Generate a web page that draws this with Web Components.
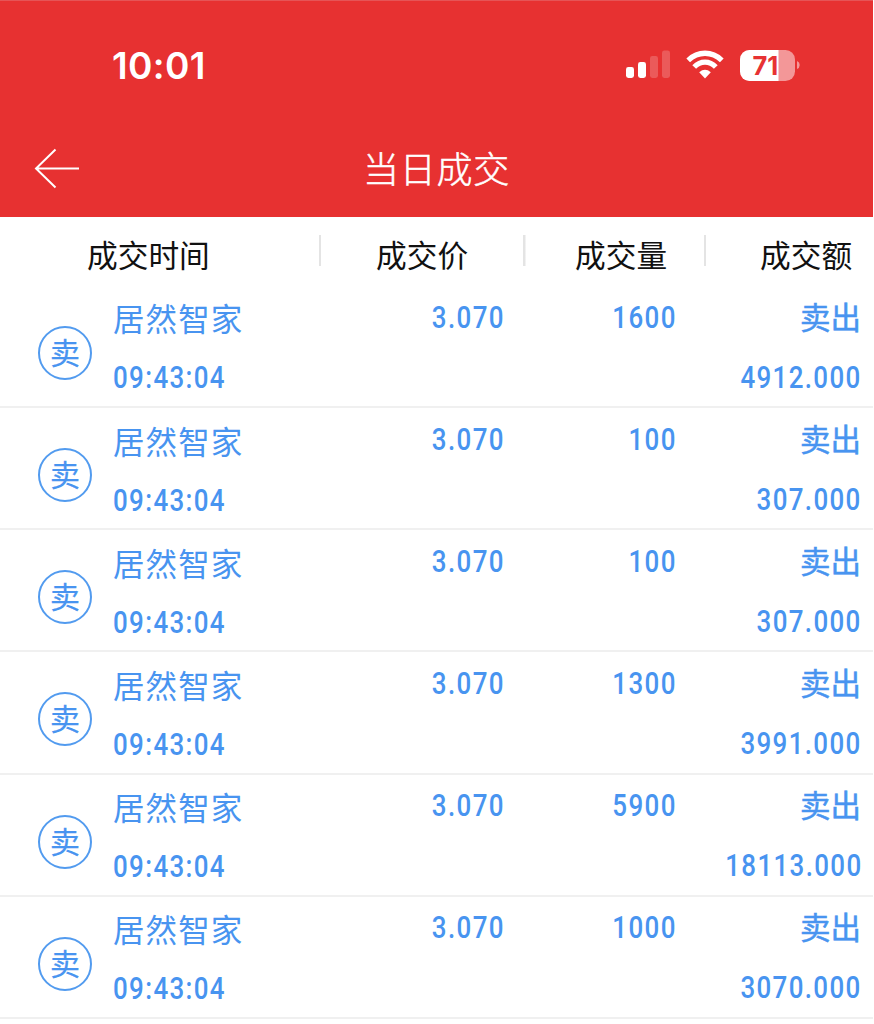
<!DOCTYPE html>
<html lang="zh-CN">
<head>
<meta charset="utf-8">
<title>当日成交</title>
<style>
html,body{margin:0;padding:0;background:#fff;overflow:hidden}
body{width:874px;height:1024px;font-family:"Noto Sans CJK SC",sans-serif}
</style>
</head>
<body>
<trade-app></trade-app>
<script>
const define = (name, html, setup) => customElements.define(name, class extends HTMLElement {
  connectedCallback() {
    if (this.shadowRoot) return;
    const t = document.createElement('template');
    t.innerHTML = html;
    this.attachShadow({mode: 'open'}).append(t.content.cloneNode(true));
    if (setup) setup(this, this.shadowRoot);
  }
});

define('status-bar', `
<style>
:host{display:flex;height:130px;box-sizing:border-box;padding:2px 72px 0 112px;justify-content:space-between;align-items:center;color:#fff}
time{font:600 37px/44px Inter,sans-serif;letter-spacing:.35px;white-space:nowrap}
.icons{display:flex;align-items:center;height:36px}
svg{display:block}
.signal{margin-right:15px}
.wifi{margin-right:15px}
</style>
<time>10:01</time>
<div class="icons">
<svg class="signal" width="46" height="36" viewBox="0 0 46 36" fill="#fff"><rect x="1" y="19" width="8" height="11" rx="2.4"/><rect x="13" y="14" width="8" height="16" rx="2.4"/><g opacity=".2"><rect x="25" y="8" width="8" height="22" rx="2.4"/><rect x="37" y="2.5" width="8" height="27.5" rx="2.4"/></g></svg>
<svg class="wifi" width="38" height="36" viewBox="0 0 38 36"><g fill="none" stroke="#fff" stroke-width="5.3"><path d="M2.2 12.3C12 2.9 26 2.9 35.8 12.3"/><path d="M8.2 19C14.5 12.6 23.5 12.6 29.8 19"/></g><path d="M13.2 24.2Q19 19.5 24.8 24.2L19 30.5Z" fill="#fff"/></svg>
<svg width="62" height="36" viewBox="0 0 62 36"><defs><clipPath id="c"><rect x="1" y="2" width="55" height="31" rx="9.5"/></clipPath></defs><g clip-path="url(#c)"><rect width="60" height="36" fill="#f39798"/><rect width="39.5" height="36" fill="#fff"/></g><path d="M58 13Q60.7 14 60.7 17Q60.7 20 58 21Z" fill="#f39798"/><text x="13.5" y="26.8" font-family="Inter,sans-serif" font-weight="700" font-size="25.5" letter-spacing="0" fill="#e73233">71</text></svg>
</div>`);

define('nav-bar', `
<style>
:host{display:grid;grid-template-columns:100px 1fr 100px;height:87px;color:#fff}
svg{display:block;margin:17px 0 0 33px}
h1{margin:11px 0 0;text-align:center;font-size:36px;line-height:52px;font-weight:300;letter-spacing:.7px;-webkit-text-stroke:.5px #fff}
</style>
<svg width="48" height="44" viewBox="0 0 48 44" fill="none" stroke="#fff" stroke-width="2"><path d="M22.5 2.5L3 21.5L22.5 40.5M3 21.5H46"/></svg>
<h1><slot></slot></h1>`);

define('column-heads', `
<style>
:host{display:grid;grid-template-columns:321px 204.5px 180.5px 168px;height:69px;color:#111;font-size:30.7px;line-height:44px}
.c{box-sizing:border-box;padding-top:15px;white-space:nowrap}
.c:not(:last-child){background:linear-gradient(#e4e4e4,#e4e4e4) right 18px/2.5px 31px no-repeat}
.a{padding-left:87px}.b{padding-left:55px}.d{padding-left:49.5px}.e{padding-left:54px}
</style>
<div class="c a">成交时间</div><div class="c b">成交价</div><div class="c d">成交量</div><div class="c e">成交额</div>`);

define('din-number', `
<style>
:host{display:block;font:500 30.5px/36px Roboto,sans-serif;white-space:nowrap}
span{display:inline-block;letter-spacing:1.6px;margin-right:-1.6px;transform:scaleX(.85);transform-origin:100% 50%}
:host([start]) span{transform-origin:0 50%}
</style><span><slot></slot></span>`);

define('sell-badge', `
<style>
:host{display:flex;box-sizing:border-box;width:54px;height:54px;border:2px solid #529bef;border-radius:50%;justify-content:center;font-size:30px;line-height:46px;-webkit-text-stroke:.25px #4894f0}
</style><slot></slot>`);

define('trade-row', `
<style>
:host{display:grid;grid-template-columns:113px 200px 190.5px 171.5px 185.5px;height:122.15px;box-sizing:border-box;border-bottom:2px solid #f0f0f0;color:#4894f0}
sell-badge{margin:40px 0 0 38px}
.name{margin-top:8.4px;font-size:31.5px;line-height:46px;letter-spacing:1.1px}
.time{margin-top:20.1px}
.num{margin-top:13.5px;text-align:right}
.side{margin-top:6.5px;margin-right:-.5px;font-size:30.5px;line-height:46px;text-align:right;-webkit-text-stroke:.5px #4894f0}
.amt{margin-top:21px;text-align:right}
</style>
<sell-badge>卖</sell-badge>
<div><div class="name">居然智家</div><din-number class="time" start>09:43:04</din-number></div>
<din-number class="num price"></din-number>
<din-number class="num vol"></din-number>
<div><div class="side">卖出</div><din-number class="amt"></din-number></div>`,
(el, r) => {
  for (const k of ['price', 'vol', 'amt']) r.querySelector('.' + k).textContent = el.getAttribute(k);
});

define('trade-app', `
<style>
:host{display:block;width:874px;height:1024px;overflow:hidden;background:#fff}
header{width:873px;height:217px;background:#e73131;box-shadow:inset 0 1px #e65456}
main{width:873px}
</style>
<header><status-bar></status-bar><nav-bar>当日成交</nav-bar></header>
<main><column-heads></column-heads>
<trade-row price="3.070" vol="1600" amt="4912.000"></trade-row>
<trade-row price="3.070" vol="100" amt="307.000"></trade-row>
<trade-row price="3.070" vol="100" amt="307.000"></trade-row>
<trade-row price="3.070" vol="1300" amt="3991.000"></trade-row>
<trade-row price="3.070" vol="5900" amt="18113.000"></trade-row>
<trade-row price="3.070" vol="1000" amt="3070.000"></trade-row>
</main>`);
</script>
</body>
</html>
